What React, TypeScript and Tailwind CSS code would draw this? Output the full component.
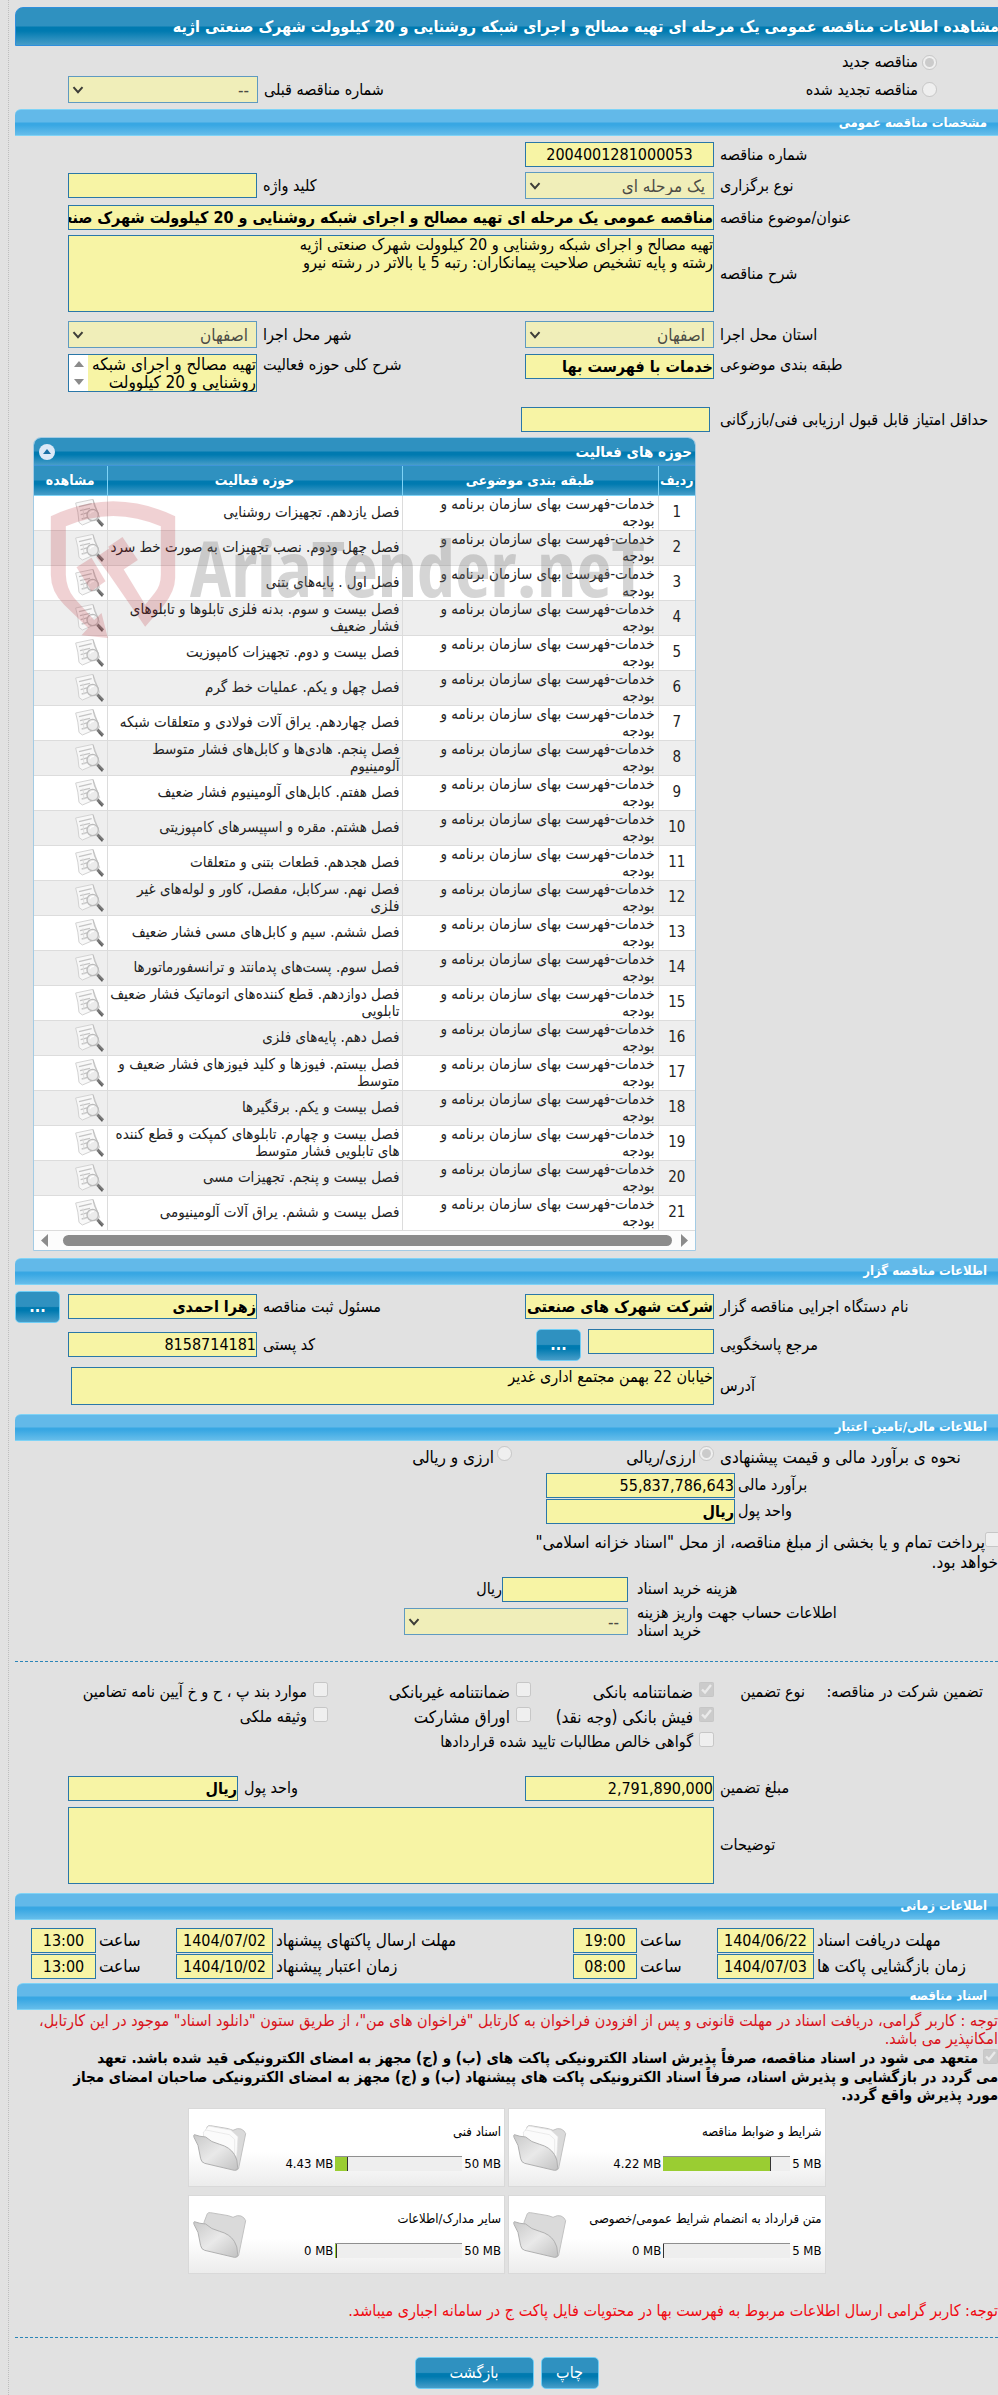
import type { ReactNode } from "react";

const mainBar =
  "bg-[linear-gradient(to_bottom,#2f91c0_0%,#2f91c0_48%,#007ab0_52%,#007ab0_62%,#479dc8_100%)]";
const sectionBar =
  "bg-[linear-gradient(to_bottom,#62b9e9_0%,#62b9e9_48%,#38a7e3_52%,#38a7e3_60%,#66bdea_100%)]";

const box = "w-full border border-[#2a77a8] bg-[#f7f4a5] text-black";
const formGrid =
  "grid grid-cols-[minmax(0,284fr)_minmax(0,189fr)_minmax(0,268fr)_minmax(0,189fr)_minmax(0,53fr)] items-center";
const financeGrid = "grid grid-cols-[minmax(0,263fr)_minmax(0,189fr)_minmax(0,531fr)] items-center";
const costGrid = "grid grid-cols-[minmax(0,370fr)_minmax(0,224fr)_minmax(0,389fr)] items-center";
const guaranteeGrid =
  "grid grid-cols-[minmax(0,193fr)_minmax(0,91fr)_minmax(0,183fr)_minmax(0,203fr)_minmax(0,313fr)] items-center h-[25px]";
const timeGrid =
  "grid grid-cols-[minmax(0,184fr)_minmax(0,97fr)_minmax(0,80fr)_minmax(0,64fr)_minmax(0,300fr)_minmax(0,97fr)_minmax(0,80fr)_minmax(0,65fr)_minmax(0,16fr)] items-center";

function Label({ htmlFor, children, tight }: { htmlFor: string; children: ReactNode; tight?: boolean }) {
  return (
    <label htmlFor={htmlFor} className={`block whitespace-nowrap text-end ${tight ? "pl-[3px]" : "pl-[6px]"}`}>
      {children}
    </label>
  );
}

function Field({ id, value = "", className = "" }: { id: string; value?: string; className?: string }) {
  return <input id={id} readOnly value={value} className={`${box} h-[25px] text-[16px] outline-none ${className}`} />;
}

function Picker({ id, value }: { id: string; value: string }) {
  return (
    <div className="relative h-[27px] w-full">
      <select
        id={id}
        disabled
        className="h-full w-full appearance-none border border-[#5f9ac0] bg-[#f0eeb9] pr-[8px] text-[17px] text-[#4c4c45] opacity-100"
      >
        <option>{value}</option>
      </select>
      <svg viewBox="0 0 12 8" className="pointer-events-none absolute top-[10px] left-[4px] h-[8px] w-[12px]">
        <path d="M1.5 1.2 6 6.2l4.5-5" fill="none" stroke="#3d3d38" strokeWidth="2" />
      </svg>
    </div>
  );
}

function Section({ title }: { title: string }) {
  return (
    <h2
      className={`flex h-[27px] items-center rounded-tl-[6px] border-y border-[#7fd3f6] pr-[11px] text-[13px] font-bold text-white ${sectionBar}`}
    >
      {title}
    </h2>
  );
}

function BlueButton({ children, className }: { children: ReactNode; className: string }) {
  return (
    <button type="button" className={`h-[32px] shrink-0 rounded-[5px] border border-[#6fcdf5] text-white ${mainBar} ${className}`}>
      {children}
    </button>
  );
}

function Tick({ id, label, checked = false, small = false }: { id: string; label: string; checked?: boolean; small?: boolean }) {
  return (
    <span className={`flex items-center gap-[6px] ${small ? "text-[16px]" : "text-[17px]"}`}>
      <input id={id} type="checkbox" disabled checked={checked} readOnly className="mb-[6px] h-[15px] w-[15px] shrink-0" />
      <label htmlFor={id} className="whitespace-nowrap">
        {label}
      </label>
    </span>
  );
}

function DocumentIcon() {
  return (
    <svg viewBox="50 22 90 84" className="h-[28px] w-[30px]" aria-hidden="true">
      <path d="M52 34 104 23 124 78 72 100 62 92Q60 60 52 34Z" fill="#f8f8f8" stroke="#d2d2d2" strokeWidth="3" />
      <path d="M62 45l38-9M65 57l30-7M67 69l22-6M70 82l18-5" stroke="#c4c4c4" strokeWidth="4" />
      <path d="M74 50l3 34" stroke="#dedede" strokeWidth="3" />
      <path d="M104 24q2 18 14 38" stroke="#bdbdbd" strokeWidth="3" fill="none" />
      <circle cx="103" cy="70" r="17" fill="#ececec" stroke="#bcbcbc" strokeWidth="4" />
      <path d="M94 66q4-8 13-7" stroke="#fff" strokeWidth="4" fill="none" />
      <path d="M117 84l17 17" stroke="#7a7a7a" strokeWidth="9" />
      <path d="M121 92l11 12" stroke="#5c5c5c" strokeWidth="4" />
    </svg>
  );
}

function FolderIcon({ full }: { full: boolean }) {
  return (
    <svg viewBox="20 74 168 144" className="mt-[15px] h-[48px] w-[56px] shrink-0" aria-hidden="true">
      <defs>
        <linearGradient id="folderFront" x1="0" y1="0" x2="1" y2="1">
          <stop offset="0" stopColor="#c9c9c9" />
          <stop offset="0.5" stopColor="#e9e9e9" />
          <stop offset="1" stopColor="#c2c2c2" />
        </linearGradient>
      </defs>
      <path
        d="M56 108 66 82q3-4 9-3l54 9 14 5q14-8 24-4t14 14l-20 98q-1 12-9 10L62 186Z"
        fill="#dadada"
        stroke="#c2c2c2"
        strokeWidth="3"
      />
      {full && (
        <g fill="#fbfbfb" stroke="#e2e2e2" strokeWidth="2">
          <path d="M60 92l10-12 66 12 22 20-4 60-92-34Z" />
          <path d="M54 98l8-6 70 14 16 14v44l-92-40Z" />
        </g>
      )}
      <path
        d="M27 106q16 6 34 7 16 16 42 22 30 8 44 30 10 14 10 40-1 10-10 8L58 192q-10-3-12-14l-8-40-12-24q-2-7 1-8Z"
        fill="url(#folderFront)"
        stroke="#b0b0b0"
        strokeWidth="3"
        strokeLinejoin="round"
      />
    </svg>
  );
}

function FileCard({ title, used, limit, percent }: { title: string; used: string; limit: string; percent: number }) {
  return (
    <div className="flex h-[79px] justify-between border border-[#d9d9d9] bg-gradient-to-b from-white from-55% to-[#ececec] pr-[3px] pl-[3px] text-[13px]">
      <div className="flex min-w-0 flex-col">
        <div className="mt-[14px] h-[18px] leading-[18px] whitespace-nowrap">{title}</div>
        <div className="mt-[14px] flex items-center gap-[2px]">
          <span className="whitespace-nowrap" dir="ltr">
            {limit}
          </span>
          <div className="flex h-[15px] w-[127px] justify-end border-t border-[#8f8f8f] bg-[#eeeeee]">
            <div
              className="border-r border-[#333] bg-[#9acd32]"
              style={{ width: `${Math.max(percent, 1)}%` }}
            />
          </div>
          <span className="whitespace-nowrap" dir="ltr">
            {used}
          </span>
        </div>
      </div>
      <FolderIcon full={percent > 0} />
    </div>
  );
}

const chapters = [
  "فصل یازدهم. تجهیزات روشنایی",
  "فصل چهل ودوم. نصب تجهیزات به صورت خط سرد",
  "فصل اول . پایه‌های بتنی",
  "فصل بیست و سوم. بدنه فلزی تابلوها و تابلوهای فشار ضعیف",
  "فصل بیست و دوم. تجهیزات کامپوزیت",
  "فصل چهل و یکم. عملیات خط گرم",
  "فصل چهاردهم. یراق آلات فولادی و متعلقات شبکه",
  "فصل پنجم. هادی‌ها و کابل‌های فشار متوسط آلومینیوم",
  "فصل هفتم. کابل‌های آلومینیوم فشار ضعیف",
  "فصل هشتم. مقره و اسپیسرهای کامپوزیتی",
  "فصل هجدهم. قطعات بتنی و متعلقات",
  "فصل نهم. سرکابل، مفصل، کاور و لوله‌های غیر فلزی",
  "فصل ششم. سیم و کابل‌های مسی فشار ضعیف",
  "فصل سوم. پست‌های پدمانتد و ترانسفورماتورها",
  "فصل دوازدهم. قطع کننده‌های اتوماتیک فشار ضعیف تابلویی",
  "فصل دهم. پایه‌های فلزی",
  "فصل بیستم. فیوزها و کلید فیوزهای فشار ضعیف و متوسط",
  "فصل بیست و یکم. برقگیرها",
  "فصل بیست و چهارم. تابلوهای کمپکت و قطع کننده های تابلویی فشار متوسط",
  "فصل بیست و پنجم. تجهیزات مسی",
  "فصل بیست و ششم. یراق آلات آلومینیومی",
];

function Watermark() {
  return (
    <div dir="ltr" className="pointer-events-none absolute top-[60px] left-[16px] flex" aria-hidden="true">
      <svg viewBox="58 200 380 426" className="h-[142px] w-[127px] opacity-20">
        <g fill="#b8202a">
          <path
            fillRule="evenodd"
            d="M60 255Q150 211 247 210 344 211 433 255V440Q432 480 400 520L343 586 234 428 196 378 240 348 270 400 343 520 372 484Q390 462 390 430V285Q320 255 247 254 174 255 105 285V430Q106 470 130 500L190 566 212 545 231 620 152 612 172 590 100 520Q60 480 60 430Z"
          />
          <path d="M232 346 275 317 321 386 276 416Z" />
          <path d="M137 408 182 379 224 450 182 480Z" />
        </g>
      </svg>
      <span className="mt-[20px] ml-[13px] font-[family-name:Open_Sans_Condensed] text-[77px] leading-[100px] font-bold text-[#777] opacity-30">
        AriaTender.neT
      </span>
    </div>
  );
}

function ActivityPanel() {
  const head = "h-[29px] border-b border-[#7fd3f6] p-0 text-[14px] font-bold text-white";
  const cell = "h-[35px] border-b border-[#dcdcdc] p-0";
  return (
    <div className="relative mt-[5px] mr-[302px] ml-[18px] overflow-hidden rounded-t-[8px] border border-[#a3cbe4] bg-white">
      <div className={`flex h-[28px] items-center justify-between border-b border-[#3f95d8] pr-[3px] pl-[5px] text-[15px] font-bold text-white ${mainBar}`}>
        <span>حوزه های فعالیت</span>
        <button type="button" aria-label="بستن" className="flex h-[16px] w-[16px] items-center justify-center rounded-full bg-[#dce8f7]">
          <svg viewBox="0 0 8 5" className="h-[5px] w-[8px]">
            <path d="M0 5 4 0l4 5Z" fill="#1b6fa5" />
          </svg>
        </button>
      </div>
      <table className="w-full table-fixed border-collapse text-[15px] leading-[17px] text-[#222]">
        <colgroup>
          <col className="w-[37px]" />
          <col className="w-[256px]" />
          <col />
          <col className="w-[73px]" />
        </colgroup>
        <thead className={mainBar}>
          <tr>
            <th className={`${head} border-l`}>ردیف</th>
            <th className={`${head} border-l`}>طبقه بندی موضوعی</th>
            <th className={`${head} border-l`}>حوزه فعالیت</th>
            <th className={head}>مشاهده</th>
          </tr>
        </thead>
        <tbody>
          {chapters.map((chapter, i) => (
            <tr key={chapter} className="odd:bg-white even:bg-[#eeeeee]">
              <td className={`${cell} border-l text-center`}>{i + 1}</td>
              <td className={`${cell} border-l pr-[3px] pl-[30px]`}>خدمات-فهرست بهای سازمان برنامه و بودجه</td>
              <td className={`${cell} border-l pr-[2px]`}>{chapter}</td>
              <td className={`${cell} pr-[2px]`}>
                <DocumentIcon />
              </td>
            </tr>
          ))}
        </tbody>
      </table>
      <div className="flex h-[19px] items-center justify-between bg-[#fcfcfc] px-[7px]" aria-hidden="true">
        <svg viewBox="0 0 7 13" className="h-[13px] w-[7px]">
          <path d="M0 0 7 6.5 0 13Z" fill="#8b8b8b" />
        </svg>
        <div className="mr-[9px] ml-[15px] h-[11px] flex-1 rounded-full bg-[#8b8b8b]" />
        <svg viewBox="0 0 7 13" className="h-[13px] w-[7px]">
          <path d="M7 0 0 6.5 7 13Z" fill="#8b8b8b" />
        </svg>
      </div>
      <Watermark />
    </div>
  );
}

const deadlines = [
  ["مهلت دریافت اسناد", "1404/06/22", "19:00", "مهلت ارسال پاکتهای پیشنهاد", "1404/07/02", "13:00"],
  ["زمان بازگشایی پاکت ها", "1404/07/03", "08:00", "زمان اعتبار پیشنهاد", "1404/10/02", "13:00"],
];

export default function App() {
  return (
    <div
      dir="rtl"
      className="overflow-hidden bg-[#e1e1e1] pl-[8px] font-[DejaVu_Sans_Condensed,DejaVu_Sans,sans-serif] text-[16px] leading-[18px] text-black"
    >
      <main className="border-l border-dotted border-[#bdbdbd] pt-[7px] pb-[6px] pl-[6px]">
        <h1
          className={`-mr-[2px] flex h-[39px] items-center overflow-hidden rounded-tl-[8px] border border-[#2f8fdc] text-[16px] font-bold whitespace-nowrap text-white ${mainBar}`}
        >
          مشاهده اطلاعات مناقصه عمومی یک مرحله ای تهیه مصالح و اجرای شبکه روشنایی و 20 کیلوولت شهرک صنعتی اژیه
        </h1>

        <div className="flex h-[30px] items-center gap-[4px] pt-[2px] pr-[61px]">
          <input id="kind-new" type="radio" name="kind" disabled checked readOnly className="h-[15px] w-[15px]" />
          <label htmlFor="kind-new">مناقصه جدید</label>
        </div>
        <div className="grid h-[27px] grid-cols-[minmax(0,472fr)_minmax(0,268fr)_minmax(0,190fr)_minmax(0,53fr)] items-center">
          <div className="flex items-center gap-[4px] pr-[61px]">
            <input id="kind-renewed" type="radio" name="kind" disabled className="h-[15px] w-[15px]" />
            <label htmlFor="kind-renewed">مناقصه تجدید شده</label>
          </div>
          <Label htmlFor="previous">شماره مناقصه قبلی</Label>
          <Picker id="previous" value="--" />
        </div>

        <div className="mt-[6px]">
          <Section title="مشخصات مناقصه عمومی" />
        </div>
        <div className={`mt-[6px] ${formGrid}`}>
          <Label htmlFor="number">شماره مناقصه</Label>
          <Field id="number" value="2004001281000053" className="text-center" />
        </div>
        <div className={`mt-[5px] ${formGrid}`}>
          <Label htmlFor="method">نوع برگزاری</Label>
          <Picker id="method" value="یک مرحله ای" />
          <Label htmlFor="keyword">کلید واژه</Label>
          <Field id="keyword" />
        </div>
        <div className={`mt-[6px] ${formGrid}`}>
          <Label htmlFor="subject">عنوان/موضوع مناقصه</Label>
          <Field
            id="subject"
            className="col-span-3 font-bold"
            value="مناقصه عمومی یک مرحله ای تهیه مصالح و اجرای شبکه روشنایی و 20 کیلوولت شهرک صنعتی اژیه"
          />
        </div>
        <div className={`mt-[5px] ${formGrid}`}>
          <Label htmlFor="description">شرح مناقصه</Label>
          <textarea
            id="description"
            readOnly
            className={`${box} col-span-3 block h-[77px] resize-none overflow-hidden`}
            value={"تهیه مصالح و اجرای شبکه روشنایی و 20 کیلوولت شهرک صنعتی اژیه\nرشته و پایه تشخیص صلاحیت پیمانکاران: رتبه 5 یا بالاتر در رشته نیرو"}
          />
        </div>
        <div className={`mt-[9px] ${formGrid}`}>
          <Label htmlFor="province">استان محل اجرا</Label>
          <Picker id="province" value="اصفهان" />
          <Label htmlFor="city">شهر محل اجرا</Label>
          <Picker id="city" value="اصفهان" />
        </div>
        <div className="mt-[6px] grid grid-cols-[minmax(0,284fr)_minmax(0,189fr)_minmax(0,268fr)_minmax(0,189fr)_minmax(0,53fr)] items-start">
          <div className="pt-[2px]">
            <Label htmlFor="category">طبقه بندی موضوعی</Label>
          </div>
          <Field id="category" value="خدمات با فهرست بها" className="font-bold" />
          <div className="pt-[2px]">
            <Label htmlFor="scope">شرح کلی حوزه فعالیت</Label>
          </div>
          <div className={`${box} flex h-[38px]`}>
            <textarea
              id="scope"
              readOnly
              className="block h-full min-w-0 flex-1 resize-none overflow-hidden text-[17px] whitespace-pre"
              value={"تهیه مصالح و اجرای شبکه\nروشنایی و 20 کیلوولت"}
            />
            <div className="flex w-[19px] flex-col items-center justify-between bg-white py-[6px]" aria-hidden="true">
              <svg viewBox="0 0 10 6" className="h-[6px] w-[10px]">
                <path d="M0 6 5 0l5 6Z" fill="#8b8b8b" />
              </svg>
              <svg viewBox="0 0 10 6" className="h-[6px] w-[10px]">
                <path d="M0 0 5 6l5-6Z" fill="#8b8b8b" />
              </svg>
            </div>
          </div>
        </div>
        <div className={`mt-[15px] ${formGrid}`}>
          <Label htmlFor="score">حداقل امتیاز قابل قبول ارزیابی فنی/بازرگانی</Label>
          <div className="-ml-[4px] pr-[4px]">
            <Field id="score" />
          </div>
        </div>

        <ActivityPanel />

        <div className="mt-[7px]">
          <Section title="اطلاعات مناقصه گزار" />
        </div>
        <div className={`mt-[6px] ${formGrid}`}>
          <Label htmlFor="agency">نام دستگاه اجرایی مناقصه گزار</Label>
          <Field id="agency" value="شرکت شهرک های صنعتی" className="font-bold" />
          <Label htmlFor="officer">مسئول ثبت مناقصه</Label>
          <Field id="officer" value="زهرا احمدی" className="font-bold" />
          <div className="flex justify-end">
            <BlueButton className="w-[45px] font-bold">...</BlueButton>
          </div>
        </div>
        <div className={`mt-[6px] ${formGrid}`}>
          <Label htmlFor="contact">مرجع پاسخگویی</Label>
          <div className="flex gap-[7px]">
            <div className="w-[126px]">
              <Field id="contact" />
            </div>
            <BlueButton className="w-[45px] font-bold">...</BlueButton>
          </div>
          <Label htmlFor="postal">کد پستی</Label>
          <Field id="postal" value="8158714181" />
        </div>
        <div className={`mt-[6px] ${formGrid}`}>
          <Label htmlFor="address">آدرس</Label>
          <div className="col-span-3 pl-[3px]">
            <textarea
              id="address"
              readOnly
              className={`${box} block h-[38px] resize-none overflow-hidden`}
              value="خیابان 22 بهمن مجتمع اداری غدیر"
            />
          </div>
        </div>

        <div className="mt-[9px]">
          <Section title="اطلاعات مالی/تامین اعتبار" />
        </div>
        <fieldset className="grid h-[32px] grid-cols-[minmax(0,284fr)_minmax(0,202fr)_minmax(0,497fr)] items-center text-[17px]">
          <span className="pl-[6px] text-end">نحوه ی برآورد مالی و قیمت پیشنهادی</span>
          <span className="flex items-center gap-[3px]">
            <input id="rial" type="radio" name="currency" disabled checked readOnly className="mb-[6px] h-[15px] w-[15px]" />
            <label htmlFor="rial">ارزی/ریالی</label>
          </span>
          <span className="flex items-center gap-[3px]">
            <input id="mixed" type="radio" name="currency" disabled className="mb-[6px] h-[15px] w-[15px]" />
            <label htmlFor="mixed">ارزی و ریالی</label>
          </span>
        </fieldset>
        <div className={financeGrid}>
          <Label htmlFor="estimate" tight>برآورد مالی</Label>
          <Field id="estimate" value="55,837,786,643" />
        </div>
        <div className={`mt-[1px] ${financeGrid}`}>
          <Label htmlFor="unit" tight>واحد پول</Label>
          <Field id="unit" value="ریال" className="font-bold" />
        </div>
        <div className="mt-[8px] h-[39px] text-[17px]">
          <input id="treasury" type="checkbox" disabled className="-mr-[2px] mb-[6px] h-[15px] w-[15px] align-middle" />
          <label htmlFor="treasury">
            پرداخت تمام و یا بخشی از مبلغ مناقصه، از محل "اسناد خزانه اسلامی"
            <br />
            خواهد بود.
          </label>
        </div>
        <div className={`mt-[6px] ${costGrid}`}>
          <label htmlFor="fee" className="pl-[9px] text-end">هزینه خرید اسناد</label>
          <div className="flex items-center">
            <div className="w-[126px]">
              <Field id="fee" />
            </div>
            <span>ریال</span>
          </div>
        </div>
        <div className={`mt-[2px] ${costGrid}`}>
          <label htmlFor="account" className="pl-[9px] text-end">
            اطلاعات حساب جهت واریز هزینه
            <br />
            خرید اسناد
          </label>
          <Picker id="account" value="--" />
        </div>

        <div className="mt-[21px] border-t border-dashed border-[#2a85b8]" />

        <div className={`mt-[18px] ${guaranteeGrid}`}>
          <span className="pr-[15px] whitespace-nowrap">تضمین شرکت در مناقصه:</span>
          <span>نوع تضمین</span>
          <Tick id="bank" label="ضمانتنامه بانکی" checked />
          <Tick id="nonbank" label="ضمانتنامه غیربانکی" />
          <Tick id="clauses" label="موارد بند پ ، ح و خ آیین نامه تضامین" small />
        </div>
        <div className={guaranteeGrid}>
          <span className="col-span-2" />
          <Tick id="cash" label="فیش بانکی (وجه نقد)" checked />
          <Tick id="bonds" label="اوراق مشارکت" />
          <Tick id="estate" label="وثیقه ملکی" small />
        </div>
        <div className={guaranteeGrid}>
          <span className="col-span-2" />
          <Tick id="claims" label="گواهی خالص مطالبات تایید شده قراردادها" small />
        </div>

        <div className="mt-[21px] grid grid-cols-[minmax(0,284fr)_minmax(0,189fr)_minmax(0,287fr)_minmax(0,170fr)_minmax(0,53fr)] items-center">
          <Label htmlFor="amount">مبلغ تضمین</Label>
          <Field id="amount" value="2,791,890,000" />
          <Label htmlFor="amount-unit">واحد پول</Label>
          <Field id="amount-unit" value="ریال" className="font-bold" />
        </div>
        <div className={`mt-[6px] ${formGrid}`}>
          <Label htmlFor="notes">توضیحات</Label>
          <div className="col-span-3">
            <textarea id="notes" readOnly className={`${box} block h-[77px] resize-none`} value="" />
          </div>
        </div>

        <div className="mt-[9px]">
          <Section title="اطلاعات زمانی" />
        </div>
        <div className="mt-[8px] flex flex-col gap-[1px] text-[17px]">
          {deadlines.map(([first, date1, time1, second, date2, time2], i) => (
            <div key={first} className={timeGrid}>
              <Label htmlFor={`d1-${i}`} tight>{first}</Label>
              <Field id={`d1-${i}`} value={date1} className="text-center" />
              <Label htmlFor={`t1-${i}`} tight>ساعت</Label>
              <Field id={`t1-${i}`} value={time1} className="text-center" />
              <Label htmlFor={`d2-${i}`} tight>{second}</Label>
              <Field id={`d2-${i}`} value={date2} className="text-center" />
              <Label htmlFor={`t2-${i}`} tight>ساعت</Label>
              <Field id={`t2-${i}`} value={time2} className="text-center" />
            </div>
          ))}
        </div>

        <div className="mt-[4px] pl-[2px]">
          <Section title="اسناد مناقصه" />
        </div>
        <p className="mt-[2px] text-[#d9121a]">
          توجه : کاربر گرامی، دریافت اسناد در مهلت قانونی و پس از افزودن فراخوان به کارتابل "فراخوان های من"، از طریق ستون "دانلود اسناد" موجود در این کارتابل، امکانپذیر می باشد.
        </p>
        <div className="mt-[1px] text-[15px] font-bold">
          <input id="commit" type="checkbox" disabled checked readOnly className="mb-[4px] ml-[5px] h-[15px] w-[15px] align-middle" />
          <label htmlFor="commit">
            متعهد می شود در اسناد مناقصه، صرفاً پذیرش اسناد الکترونیکی پاکت های (ب) و (ج) مجهز به امضای الکترونیکی قید شده باشد. تعهد
            <br />
            می گردد در بازگشایی و پذیرش اسناد، صرفاً اسناد الکترونیکی پاکت های پیشنهاد (ب) و (ج) مجهز به امضای الکترونیکی صاحبان امضای مجاز
            <br />
            مورد پذیرش واقع گردد.
          </label>
        </div>

        <div className="mx-auto mt-[4px] grid max-w-[638px] grid-cols-2 gap-x-[3px] gap-y-[8px]">
          <FileCard title="شرایط و ضوابط مناقصه" used="4.22 MB" limit="5 MB" percent={85} />
          <FileCard title="اسناد فنی" used="4.43 MB" limit="50 MB" percent={10} />
          <FileCard title="متن قرارداد به انضمام شرایط عمومی/خصوصی" used="0 MB" limit="5 MB" percent={0} />
          <FileCard title="سایر مدارک/اطلاعات" used="0 MB" limit="50 MB" percent={0} />
        </div>

        <p className="mt-[28px] text-[#f00a12]">
          توجه: کاربر گرامی ارسال اطلاعات مربوط به فهرست بها در محتویات فایل پاکت ج در سامانه اجباری میباشد.
        </p>
        <div className="mt-[17px] border-t border-dashed border-[#2a85b8]" />
        <div className="mt-[19px] flex justify-center gap-[7px]">
          <BlueButton className="w-[58px]">چاپ</BlueButton>
          <BlueButton className="w-[119px]">بازگشت</BlueButton>
        </div>
      </main>
    </div>
  );
}
